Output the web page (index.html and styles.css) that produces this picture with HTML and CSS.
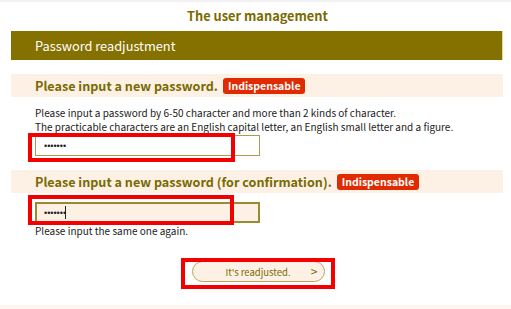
FILE: index.html
```html
<!DOCTYPE html>
<html lang="en">
<head>
    <meta charset="UTF-8">
    <meta name="viewport" content="width=device-width, initial-scale=1.0">
    <title>The user management</title>
    <link rel="stylesheet" href="styles.css">
</head>
<body>
    <div class="page">
        <h1 class="page-title">The user management</h1>
        <div class="content">
            <div class="bar">Password readjustment</div>

            <form id="resetForm" action="#" method="post">
                <div class="field-head">
                    <span>Please input a new password.</span>
                    <span class="badge">Indispensable</span>
                </div>
                <p class="note">Please input a password by 6-50 character and more than 2 kinds of character.<br>
                The practicable characters are an English capital letter, an English small letter and a figure.</p>
                <div class="input-wrap">
                    <input type="password" class="pw" value="abcdefg">
                    <div class="mark mark-1"></div>
                </div>

                <div class="field-head">
                    <span>Please input a new password (for confirmation).</span>
                    <span class="badge">Indispensable</span>
                </div>
                <div class="input-wrap second">
                    <input type="password" class="pw active" value="abcdefg">
                    <span class="caret"></span>
                    <div class="mark mark-2"></div>
                </div>
                <p class="note again">Please input the same one again.</p>

                <div class="actions">
                    <div class="btn-wrap">
                        <button type="submit">It's readjusted.<span class="arrow">&gt;</span></button>
                        <div class="mark mark-3"></div>
                    </div>
                </div>
            </form>
        </div>
        <div class="footer"></div>
    </div>
</body>
</html>
```

FILE: styles.css
```css
/* General Styles */
body {
    margin: 0;
    padding: 0;
    background: #fff;
    font-family: "Noto Sans CJK JP", "Noto Sans", sans-serif;
    color: #333;
}

.page {
    width: 511px;
    height: 309px;
    overflow: hidden;
    border-top: 2px solid #f1f1f1;
    box-sizing: border-box;
}

.page-title {
    margin: 0;
    height: 29px;
    line-height: 27px;
    text-align: center;
    font-size: 12.8px;
    font-weight: bold;
    color: #7a6a00;
    padding-left: 4px;
}

.content {
    margin: 0 8px 0 11px;
}

.bar {
    height: 29px;
    line-height: 29px;
    background: #857100;
    color: #fff;
    font-size: 12.8px;
    padding-left: 24px;
    border-right: 1px solid #e9d98a;
}

/* Field headings */
.field-head {
    margin-top: 14px;
    height: 23px;
    background: #fdf1e6;
    padding-left: 24px;
    display: flex;
    align-items: center;
    gap: 5px;
    font-size: 12.6px;
    font-weight: bold;
    color: #7a6a00;
}

.badge {
    background: #e02a00;
    color: #fff;
    font-size: 10.5px;
    line-height: 16px;
    padding: 0 5px;
    border-radius: 3px;
}

.note {
    margin: 9px 0 0 24px;
    font-size: 10px;
    line-height: 14px;
    color: #222;
}

.note.again {
    margin-top: 1px;
}

/* Inputs */
.input-wrap {
    position: relative;
    margin: 1px 0 0 24px;
    width: 225px;
}

.input-wrap.second {
    margin-top: 9px;
}

.pw {
    display: block;
    box-sizing: border-box;
    width: 225px;
    height: 21px;
    border: 1px solid #ab9d50;
    background: #fff;
    padding: 0 8px;
    font-size: 9px;
    outline: none;
    color: #222;
}

.pw.active {
    border: 2px solid #9a8a30;
    background: #fdf1e6;
    padding: 0 7px;
}

.caret {
    position: absolute;
    left: 30px;
    top: 4px;
    width: 1px;
    height: 13px;
    background: #222;
}

/* Red annotation boxes */
.mark {
    position: absolute;
    border: 4px solid #f40000;
    box-sizing: border-box;
    pointer-events: none;
}

.mark-1 {
    left: -7px;
    top: -2px;
    width: 207px;
    height: 29px;
}

.mark-2 {
    left: -7px;
    top: -7px;
    width: 206px;
    height: 30px;
}

.mark-3 {
    left: -11px;
    top: -3px;
    width: 154px;
    height: 31px;
}

/* Button */
.actions {
    display: flex;
    justify-content: center;
    margin-top: 23px;
    padding-left: 2px;
}

.btn-wrap {
    position: relative;
}

button {
    position: relative;
    display: block;
    width: 133px;
    height: 21px;
    border: 1px solid #b9a661;
    border-radius: 11px;
    background: #fdf1e6;
    color: #7a6a00;
    font-family: inherit;
    font-size: 9.5px;
    padding: 0;
    cursor: pointer;
}

.arrow {
    position: absolute;
    right: 6px;
    top: 1px;
    font-size: 12px;
    line-height: 16px;
}

.footer {
    margin-top: 23px;
    height: 10px;
    background: #fdf6ef;
}
```
